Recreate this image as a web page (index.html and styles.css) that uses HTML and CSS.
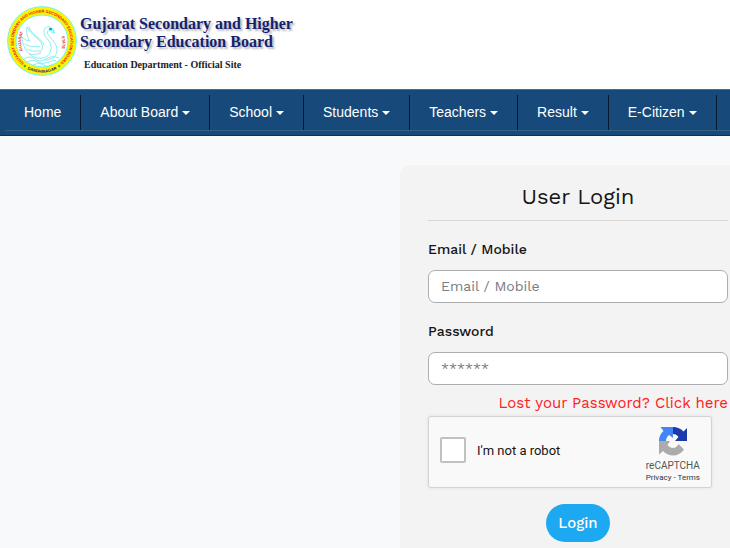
FILE: index.html
```html
<!DOCTYPE html>
<html lang="en">
<head>
<meta charset="utf-8">
<meta name="viewport" content="width=device-width, initial-scale=1">
<title>User Login</title>
<link rel="stylesheet" href="styles.css">
</head>
<body>
<header class="masthead">
  <svg class="seal" viewBox="0 0 70 70" role="img" aria-label="Board seal">
    <defs>
      <path id="ring" d="M19.100 58.500A28.400 28.400 0 1 1 50.900 58.500"/>
      <path id="base" d="M17 61A31.600 31.600 0 0 0 53 61"/>
      <path id="west" d="M16 45A21 21 0 0 1 16.500 26"/>
      <path id="east" d="M53 27A20 20 0 0 1 53 46"/>
    </defs>
    <circle cx="35" cy="35" r="34.4" fill="#fff200" stroke="#6ff5f0"/>
    <circle cx="35" cy="35" r="26" fill="#fff" stroke="#6ff5f0"/>
    <g class="ring-text">
      <text><textPath href="#ring" startOffset="50%" text-anchor="middle">GUJARAT SECONDARY AND HIGHER SECONDARY EDUCATION BOARD</textPath></text>
      <text class="city"><textPath href="#base" startOffset="50%" text-anchor="middle">GANDHINAGAR</textPath></text>
      <text><textPath href="#west" startOffset="50%" text-anchor="middle">GUJARAT</textPath></text>
      <text><textPath href="#east" startOffset="50%" text-anchor="middle">STATE</textPath></text>
    </g>
    <g fill="#2db52d"><circle cx="17.8" cy="60" r="1.2"/><circle cx="52.2" cy="60" r="1.2"/></g>
    <g fill="none" stroke="#6fe9ee" stroke-width=".8" stroke-linecap="round">
      <path d="M47 25C44 18 36 20 37 27C38 33 45 35 44 43C43 52 34 54 27 51C19 48 15 38 15 31C18 34 20 35 23 35C20 31 19 26 20 21C23 27 28 30 32 34C36 38 37 43 33 46"/>
      <path d="M47 25C44 24 42 24 40 26C42 32 51 37 50 45C49 52 43 54 38 54M22 21C24 29 34 31 37 39M18 38C24 42 29 40 33 41M20 43C25 46 29 45 33 45M23 48C27 49 31 48 34 47M43 22L48 27L44 26"/>
      <path d="M17 53Q23 49 28 53T39 53T52 52M20 56Q26 53 31 56T42 56T49 55M26 59Q32 56 37 59T45 58"/>
    </g>
    <ellipse cx="43.5" cy="23" rx="1.8" ry="1" fill="#099ca8"/>
  </svg>
  <div class="brand">
    <h1 class="brand-name">Gujarat Secondary and Higher<br>Secondary Education Board</h1>
    <p class="brand-note">Education Department - Official Site</p>
  </div>
</header>
<nav class="navbar">
  <ul class="menu">
    <li><a href="#">Home</a></li>
    <li><a class="drop" href="#">About Board</a></li>
    <li><a class="drop" href="#">School</a></li>
    <li><a class="drop" href="#">Students</a></li>
    <li><a class="drop" href="#">Teachers</a></li>
    <li><a class="drop" href="#">Result</a></li>
    <li><a class="drop" href="#">E-Citizen</a></li>
  </ul>
</nav>
<main class="page">
  <form class="card">
    <h2 class="card-title">User Login</h2>
    <label class="label" for="user">Email / Mobile</label>
    <input class="field" id="user" type="text" placeholder="Email / Mobile">
    <label class="label" for="pass">Password</label>
    <input class="field" id="pass" type="password" placeholder="******">
    <a class="lost" href="#">Lost your Password? Click here</a>
    <div class="captcha">
      <input class="tick" id="robot" type="checkbox">
      <label class="robot" for="robot">I'm not a robot</label>
      <div class="captcha-brand">
        <svg class="arrows" viewBox="0 0 30 30" aria-hidden="true">
          <path fill="#1c3aa9" d="M15 1C19 1 23 2.600 25.500 5.500L29 2V15H17L20.500 11C19 9 17.500 8 15 8Z"/>
          <path fill="#4285f4" d="M15 1V12L11 9C9 10.500 8 12.500 8 15H1C1 11 2.500 7.500 5.500 5L2.500 1Z"/>
          <path fill="#ababab" d="M1 15H12L9.500 19C13 23.500 18.500 22.500 20.500 18L26 23.500C20.500 31.500 10.500 31 5 25L1 28.500Z"/>
        </svg>
        <span class="captcha-name">reCAPTCHA</span>
        <span class="captcha-links"><a href="#">Privacy</a> - <a href="#">Terms</a></span>
      </div>
    </div>
    <button class="login" type="submit">Login</button>
  </form>
</main>
</body>
</html>
```
FILE: styles.css
```css
* { box-sizing: border-box; }

body {
  margin: 0;
  min-height: 100vh;
  display: flex;
  flex-direction: column;
  background: #f8f9fb;
  color: #151515;
  font-family: "Work Sans", Inter, sans-serif;
  overflow-x: hidden;
}

a { color: inherit; text-decoration: none; }

.masthead {
  display: flex;
  align-items: flex-start;
  gap: 3px;
  padding: 6px 7px 13px;
  background: #fff;
}

.seal { width: 70px; height: 70px; }
.ring-text {
  font: bold 4px "Liberation Sans", sans-serif;
  fill: #e3201b;
}
.ring-text .city { fill: #20208c; }

.brand { padding-top: 9px; font-family: "Palatino Linotype", "Liberation Serif", serif; }
.brand-name {
  margin: 0;
  font-size: 16px;
  line-height: 18px;
  color: #141f70;
  text-shadow: 2px 2px 2px #b5b5b5;
}
.brand-note {
  margin: 6px 0 0 4px;
  font-size: 10px;
  line-height: 16px;
  font-weight: bold;
  color: #222;
}

.navbar {
  padding: 5px 0 4px 5px;
  background: #174a7a;
  border-top: 1px solid #456b96;
  border-bottom: 1px solid #0c325a;
}
.menu {
  display: flex;
  margin: 0;
  padding: 0;
  list-style: none;
  border-bottom: 1px solid #36607f;
}
.menu li { border-right: 1px solid #06192e; }
.menu a {
  display: flex;
  align-items: center;
  gap: 4px;
  padding: 0 19px;
  font: 14px/35px "Liberation Sans", sans-serif;
  color: #fff;
  white-space: nowrap;
}
.drop::after {
  content: "";
  border: 4px solid transparent;
  border-top-color: #fff;
  border-bottom: 0;
}

.page {
  flex: 1;
  display: grid;
  grid-template-columns: 400fr 330fr;
  padding-top: 29px;
}

.card {
  grid-column: 2;
  display: flex;
  flex-direction: column;
  padding: 16px 2px 5px 28px;
  background: #f3f3f3;
  border-radius: 10px 0 0 0;
}
.card-title {
  margin: 0;
  padding-bottom: 7px;
  border-bottom: 1px solid #d8d8d8;
  font-size: 22px;
  line-height: 32px;
  font-weight: 400;
  text-align: center;
}
.label {
  margin: 16px 0 9px;
  font-size: 14px;
  line-height: 24px;
  font-weight: 500;
}
.field {
  width: 100%;
  height: 33px;
  padding: 0 12px 2px;
  border: 1px solid #adadad;
  border-radius: 7px;
  background: #fff;
  font: 14px "Work Sans", Inter, sans-serif;
}
.field::placeholder { color: #747c84; opacity: 1; }
.lost {
  align-self: flex-end;
  margin-top: 6px;
  font-size: 15px;
  line-height: 24px;
  color: #ff2020;
  white-space: nowrap;
}

.captcha {
  display: flex;
  align-items: center;
  width: 284px;
  height: 72px;
  margin-top: 1px;
  padding: 0 11px 4px;
  border: 1px solid #d3d3d3;
  border-radius: 3px;
  background: #f9f9f9;
  box-shadow: 0 0 3px #ddd;
  font-family: Roboto, sans-serif;
}
.tick {
  appearance: none;
  width: 26px;
  height: 26px;
  margin: 0;
  border: 2px solid #c1c1c1;
  border-radius: 2px;
  background: #fff;
}
.robot { margin-left: 11px; font-size: 13px; }
.captcha-brand {
  display: flex;
  flex-direction: column;
  align-items: center;
  align-self: flex-start;
  margin: 9px 0 0 auto;
  color: #555;
}
.arrows { width: 30px; height: 30px; }
.captcha-name { margin-top: 3px; font-size: 10px; line-height: 14px; }
.captcha-links { font-size: 8px; line-height: 10px; color: #333; }

.login {
  align-self: center;
  height: 38px;
  margin-top: 16px;
  padding: 0 12px;
  border: 0;
  border-radius: 19px;
  background: #1da8f2;
  color: #fff;
  font: 500 15px "Work Sans", Inter, sans-serif;
}
```
